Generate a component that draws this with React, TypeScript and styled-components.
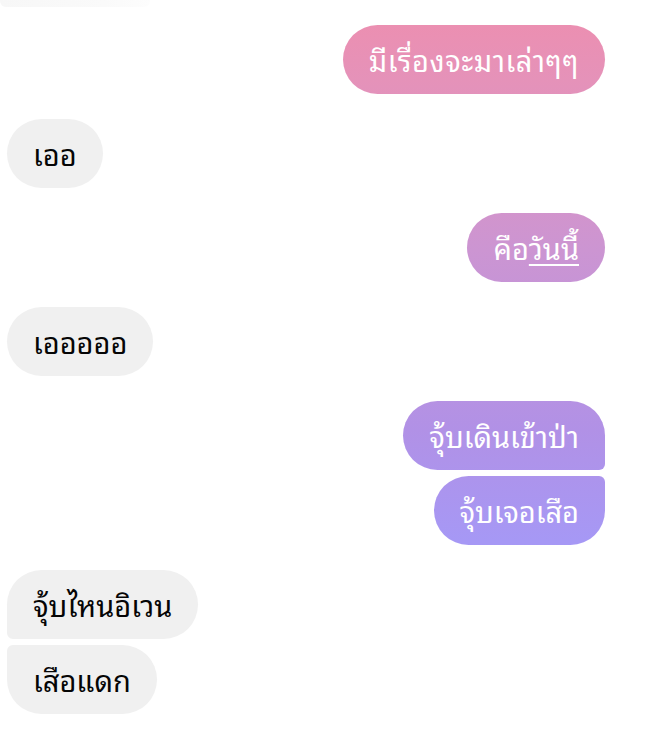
import * as React from 'react';
import styled, { createGlobalStyle, css } from 'styled-components';

const GlobalStyle = createGlobalStyle`
  html, body {
    margin: 0;
    padding: 0;
    background: #ffffff;
  }
  body {
    font-family: "Noto Sans Thai Looped", "Noto Sans Thai", "Noto Sans", sans-serif;
  }
`;

type Side = 'in' | 'out';
type Pos = 'single' | 'first' | 'last';

const Thread = styled.div`
  display: flex;
  flex-direction: column;
  padding: 0 47px 0 7px;
  width: 652px;
  box-sizing: border-box;
`;

// bottom edge of an earlier message, scrolled mostly out of view
const Stub = styled.div`
  width: 150px;
  height: 7px;
  margin: 0 0 -7px -7px;
  background: linear-gradient(to right, #f7f7f7, #fafafa 70%, #fdfdfd);
  border-radius: 0 0 6px 6px;
`;

const Group = styled.div<{ $side: Side }>`
  display: flex;
  flex-direction: column;
  align-items: ${(p) => (p.$side === 'out' ? 'flex-end' : 'flex-start')};
  gap: 6px;
  margin-top: 25px;
`;

const radius = (side: Side, pos: Pos) => {
  const big = '35px';
  const small = '6px';
  if (pos === 'single') return css`border-radius: ${big};`;
  if (side === 'out') {
    return pos === 'first'
      ? css`border-radius: ${big} ${big} ${small} ${big};`
      : css`border-radius: ${big} ${small} ${big} ${big};`;
  }
  return pos === 'first'
    ? css`border-radius: ${big} ${big} ${big} ${small};`
    : css`border-radius: ${small} ${big} ${big} ${big};`;
};

const Bubble = styled.div<{ $side: Side; $pos: Pos; $wide?: boolean }>`
  box-sizing: border-box;
  height: 69px;
  display: flex;
  align-items: center;
  padding: 0 26px;
  font-size: 29px;
  line-height: 1;
  white-space: nowrap;
  letter-spacing: ${(p) => (p.$wide ? '0.6px' : '0')};
  ${(p) => radius(p.$side, p.$pos)}
  ${(p) =>
    p.$side === 'out'
      ? css`
          color: #ffffff;
          background-image: linear-gradient(
            to bottom,
            #ee8eae 0px,
            #e592b9 80px,
            #cc95d2 250px,
            #b191e6 430px,
            #a698f5 540px,
            #a29af7 735px
          );
          background-attachment: fixed;
        `
      : css`
          color: #050505;
          background: #f0f0f0;
        `}
`;

const Link = styled.span`
  text-decoration: underline;
  text-underline-offset: 4px;
  text-decoration-thickness: 2px;
`;

type Msg = { text: React.ReactNode; wide?: boolean };
const groups: { side: Side; msgs: Msg[] }[] = [
  { side: 'out', msgs: [{ text: 'มีเรื่องจะมาเล่าๆๆ', wide: true }] },
  { side: 'in', msgs: [{ text: 'เออ' }] },
  {
    side: 'out',
    msgs: [
      {
        text: (
          <>
            คือ<Link>วันนี้</Link>
          </>
        ),
      },
    ],
  },
  { side: 'in', msgs: [{ text: 'เอออออ' }] },
  { side: 'out', msgs: [{ text: 'จุ้บเดินเข้าป่า' }, { text: 'จุ้บเจอเสือ' }] },
  { side: 'in', msgs: [{ text: 'จุ้บไหนอิเวน' }, { text: 'เสือแดก' }] },
];

export default function App() {
  return (
    <>
      <GlobalStyle />
      <Thread>
        <Stub />
        {groups.map((g, i) => (
          <Group key={i} $side={g.side}>
            {g.msgs.map((m, j) => {
              const pos: Pos =
                g.msgs.length === 1 ? 'single' : j === 0 ? 'first' : 'last';
              return (
                <Bubble key={j} $side={g.side} $pos={pos} $wide={m.wide}>
                  {m.text}
                </Bubble>
              );
            })}
          </Group>
        ))}
      </Thread>
    </>
  );
}
